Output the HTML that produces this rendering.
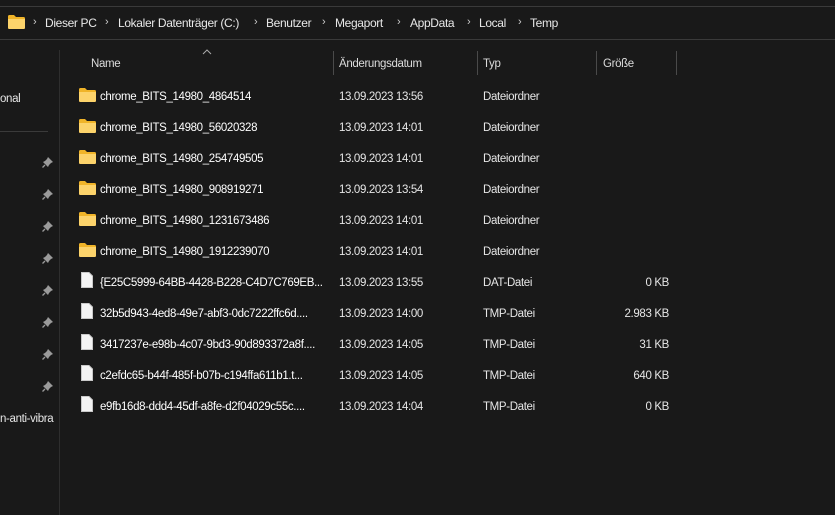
<!DOCTYPE html>
<html><head><meta charset="utf-8"><style>
body{margin:0;width:835px;height:515px;background:#191919;overflow:hidden;font-family:"Liberation Sans",sans-serif;font-size:11.5px;letter-spacing:-0.35px;color:#fff;position:relative}
.a{position:absolute;white-space:nowrap}
.hl{position:absolute;left:0;width:835px;height:1px;background:#3a3a3a}
.bc{top:16px;font-size:12px;color:#e8e8e8}
.ch{top:16px;color:#ccc;font-size:11px}
.sep{position:absolute;top:51px;width:1px;height:24px;background:#4a4a4a}
.hd{top:58px;color:#dcdcdc}
.pin{position:absolute;left:42px}
.r{color:#fff}
.d{color:#e6e6e6}
</style></head><body>
<div class="hl" style="top:6px"></div>
<div class="hl" style="top:39px"></div>
<svg class="a" style="left:8px;top:15px" width="17" height="14" viewBox="0 0 17 14"><path d="M0 1.5Q0 0 1.5 0H6L8 2H15.5Q17 2 17 3.5V12.5Q17 14 15.5 14H1.5Q0 14 0 12.5Z" fill="#f0b429"/><path d="M0 4H17V12.5Q17 14 15.5 14H1.5Q0 14 0 12.5Z" fill="#fcd36b"/></svg>
<span class="a ch" style="left:33px">›</span>
<span class="a bc" style="left:45px">Dieser PC</span>
<span class="a ch" style="left:105px">›</span>
<span class="a bc" style="left:118px">Lokaler Datenträger (C:)</span>
<span class="a ch" style="left:254px">›</span>
<span class="a bc" style="left:266px">Benutzer</span>
<span class="a ch" style="left:322px">›</span>
<span class="a bc" style="left:335px">Megaport</span>
<span class="a ch" style="left:397px">›</span>
<span class="a bc" style="left:410px">AppData</span>
<span class="a ch" style="left:467px">›</span>
<span class="a bc" style="left:479px">Local</span>
<span class="a ch" style="left:518px">›</span>
<span class="a bc" style="left:530px">Temp</span>
<div class="a" style="left:59px;top:50px;width:1px;height:465px;background:#2e2e2e"></div>
<div class="a" style="left:0;top:131px;width:48px;height:1px;background:#3a3a3a"></div>
<span class="a" style="left:0;top:93px;color:#e6e6e6">onal</span>
<span class="a" style="left:0;top:413px;color:#e6e6e6">n-anti-vibra</span>
<svg class="a" style="left:202px;top:49px" width="10" height="6"><path d="M1 5L5 1L9 5" stroke="#aaa" fill="none"/></svg>
<span class="a hd" style="left:91px">Name</span>
<div class="sep" style="left:333px"></div><span class="a hd" style="left:339px">Änderungsdatum</span>
<div class="sep" style="left:477px"></div><span class="a hd" style="left:483px">Typ</span>
<div class="sep" style="left:596px"></div><span class="a hd" style="left:603px">Größe</span>
<div class="sep" style="left:676px"></div>
<div id="rows"></div>
<script>
var R=[["f","chrome_BITS_14980_4864514","13.09.2023 13:56","Dateiordner",""],
["f","chrome_BITS_14980_56020328","13.09.2023 14:01","Dateiordner",""],
["f","chrome_BITS_14980_254749505","13.09.2023 14:01","Dateiordner",""],
["f","chrome_BITS_14980_908919271","13.09.2023 13:54","Dateiordner",""],
["f","chrome_BITS_14980_1231673486","13.09.2023 14:01","Dateiordner",""],
["f","chrome_BITS_14980_1912239070","13.09.2023 14:01","Dateiordner",""],
["d","{E25C5999-64BB-4428-B228-C4D7C769EB...","13.09.2023 13:55","DAT-Datei","0 KB"],
["d","32b5d943-4ed8-49e7-abf3-0dc7222ffc6d....","13.09.2023 14:00","TMP-Datei","2.983 KB"],
["d","3417237e-e98b-4c07-9bd3-90d893372a8f....","13.09.2023 14:05","TMP-Datei","31 KB"],
["d","c2efdc65-b44f-485f-b07b-c194ffa611b1.t...","13.09.2023 14:05","TMP-Datei","640 KB"],
["d","e9fb16d8-ddd4-45df-a8fe-d2f04029c55c....","13.09.2023 14:04","TMP-Datei","0 KB"]];
var h="";
R.forEach(function(r,i){var y=91+i*31;
if(r[0]=="f")h+='<svg class="a" style="left:79px;top:'+(y-3)+'px" width="17" height="14" viewBox="0 0 17 14"><path d="M0 1.5Q0 0 1.5 0H6L8 2H15.5Q17 2 17 3.5V12.5Q17 14 15.5 14H1.5Q0 14 0 12.5Z" fill="#f0b429"/><path d="M0 4H17V12.5Q17 14 15.5 14H1.5Q0 14 0 12.5Z" fill="#fcd36b"/></svg>';
else h+='<svg class="a" style="left:81px;top:'+(y-5)+'px" width="12" height="16" viewBox="0 0 12 16"><path d="M0.5 0.5H8L11.5 4V15.5H0.5Z" fill="#f4f4f4" stroke="#c8c8c8"/></svg>';
h+='<span class="a r" style="left:100px;top:'+y+'px">'+r[1]+'</span><span class="a d" style="left:339px;top:'+y+'px">'+r[2]+'</span><span class="a d" style="left:483px;top:'+y+'px">'+r[3]+'</span><span class="a d" style="right:166px;top:'+y+'px">'+r[4]+'</span>';});
for(var k=0;k<8;k++){var py=156+k*32;h+='<svg class="pin" style="top:'+py+'px" width="12" height="12" viewBox="0 0 12 12"><path d="M6 1L11 6L9 7L7 9L6 11L1 6L3 5L5 3Z" fill="#9a9a9a"/><path d="M3 9L0.5 11.5" stroke="#9a9a9a" stroke-width="1.3"/></svg>';}
document.getElementById("rows").innerHTML=h;
</script>
</body></html>
